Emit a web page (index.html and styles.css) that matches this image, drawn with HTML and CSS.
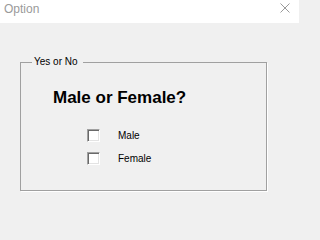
FILE: index.html
```html
<!DOCTYPE html>
<html>
<head>
<meta charset="utf-8">
<link rel="stylesheet" href="styles.css">
</head>
<body>
<div class="window">
  <div class="titlebar">
    <span class="title">Option</span>
    <svg class="close" width="10" height="10" viewBox="0 0 10 10"><path d="M0.5 0.5L9.5 9.5M9.5 0.5L0.5 9.5" stroke="#9a9a9a" stroke-width="1" fill="none"/></svg>
  </div>
  <div class="client">
    <fieldset class="group">
      <legend class="legend">Yes or No</legend>
      <div class="question">Male or Female?</div>
      <div class="options">
        <label class="option"><span class="check"></span><span class="opt-label">Male</span></label>
        <label class="option"><span class="check"></span><span class="opt-label">Female</span></label>
      </div>
    </fieldset>
  </div>
</div>
</body>
</html>
```
FILE: styles.css
```css
html, body {
  margin: 0;
  padding: 0;
  background: #f0f0f0;
}
.window {
  width: 299px;
  height: 224px;
  background: #f0f0f0;
  font-family: "Liberation Sans", Arial, sans-serif;
  color: #000;
}
.titlebar {
  height: 23px;
  background: #fff;
  display: flex;
  justify-content: space-between;
  align-items: flex-start;
  padding: 2px 9px 0 4px;
  box-sizing: border-box;
}
.title {
  font-size: 12px;
  line-height: 14px;
  color: #9a9a9a;
}
.close {
  margin-top: 1px;
  display: block;
}
.client {
  padding-top: 33px;
}
.group {
  margin: 0 0 0 20px;
  padding: 0 0 25px 0;
  width: 247px;
  box-sizing: border-box;
  border: 1px solid #a0a0a0;
  box-shadow: 1px 1px 0 #fff;
  min-width: 0;
}
.legend {
  margin-left: 11px;
  padding: 0 5px 0 2px;
  font-size: 10px;
  line-height: 12px;
}
.question {
  margin: 20px 0 0 32px;
  font-size: 17px;
  font-weight: bold;
  line-height: 20px;
}
.options {
  margin: 21px 0 0 66px;
  display: flex;
  flex-direction: column;
  gap: 10px;
}
.option {
  display: flex;
  align-items: center;
  height: 13px;
}
.check {
  width: 13px;
  height: 13px;
  box-sizing: border-box;
  border: 1px solid;
  border-color: #a0a0a0 #fff #fff #a0a0a0;
  box-shadow: inset 1px 1px 0 #696969, inset -1px -1px 0 #e3e3e3;
  background: #fff;
}
.opt-label {
  margin-left: 18px;
  font-size: 10px;
  line-height: 12px;
}
```
